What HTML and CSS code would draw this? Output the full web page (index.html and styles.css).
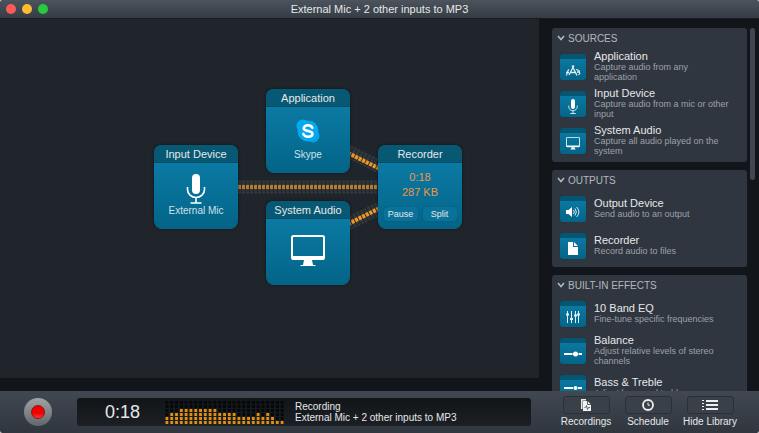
FILE: index.html
```html
<!DOCTYPE html>
<html lang="en">
<head>
    <meta charset="UTF-8">
    <meta name="viewport" content="width=device-width, initial-scale=1.0">
    <title>External Mic + 2 other inputs to MP3</title>
    <link rel="stylesheet" href="styles.css">
</head>
<body>
    <!-- shared icons -->
    <svg class="defs" width="0" height="0" aria-hidden="true">
        <symbol id="mic" viewBox="0 0 20 30">
            <rect x="6" y="0" width="8" height="20" rx="4" fill="#fff"/>
            <path d="M1.500 13v2.500a8.500 8 0 0 0 17 0V13M10 23.500V29M4.500 29h11" fill="none" stroke="#fff" stroke-width="1.600"/>
        </symbol>
        <symbol id="display" viewBox="0 0 34 32">
            <rect x="1" y="1" width="32" height="23" rx="1.500" fill="none" stroke="#fff" stroke-width="2"/>
            <path d="M1 21h32v3.500H1zM13 25h8l1 5h2.500v1h-15v-1H12z" fill="#fff"/>
        </symbol>
        <symbol id="chevron" viewBox="0 0 8 6">
            <path d="M1 1l3 3.500 3-3.500" fill="none" stroke="#b4b8bd" stroke-width="1.600"/>
        </symbol>
    </svg>

    <div class="window">
        <header class="titlebar">
            <div class="lights">
                <button class="light red" aria-label="Close"></button>
                <button class="light yellow" aria-label="Minimize"></button>
                <button class="light green" aria-label="Zoom"></button>
            </div>
            <h1>External Mic + 2 other inputs to MP3</h1>
        </header>

        <div class="content">
            <main class="canvas">
                <svg class="wires" width="540" height="270" aria-hidden="true">
                    <g class="wire">
                        <path class="off" d="M238 168H378"/>
                        <path class="gap" d="M238 164H378M238 172H378"/>
                        <path class="on" d="M238 168H378"/>
                    </g>
                    <g class="wire">
                        <path class="off" d="M348 132L380 148"/>
                        <path class="gap" d="M350 129L382 145M346 136L378 152"/>
                        <path class="on bright" d="M348 134L380 150"/>
                    </g>
                    <g class="wire">
                        <path class="off" d="M348 205L380 189"/>
                        <path class="gap" d="M346 201L378 185M350 209L382 193"/>
                        <path class="on bright" d="M348 205L380 189"/>
                    </g>
                </svg>

                <section class="node application">
                    <h2>Application</h2>
                    <svg class="skype" width="24" height="24" viewBox="0 0 24 24" aria-hidden="true">
                        <circle cx="7" cy="7" r="6.500" fill="#00aff0"/>
                        <circle cx="17" cy="17" r="6.500" fill="#0a9fe6"/>
                        <circle cx="12" cy="12" r="10.500" fill="#05a9ed"/>
                        <path d="M16.300 8.800C15.500 7 13.900 6.300 12 6.300c-2.300 0-4.200 1-4.200 2.900 0 3.900 8.600 1.800 8.600 5.500 0 2-2 3-4.400 3-2.200 0-4-.9-4.700-2.800" fill="none" stroke="#fff" stroke-width="2.600" stroke-linecap="round"/>
                    </svg>
                    <p>Skype</p>
                </section>

                <section class="node input-device">
                    <h2>Input Device</h2>
                    <svg class="mic" width="20" height="30" aria-hidden="true"><use href="#mic"/></svg>
                    <p>External Mic</p>
                </section>

                <section class="node system-audio">
                    <h2>System Audio</h2>
                    <svg class="display" width="34" height="32" aria-hidden="true"><use href="#display"/></svg>
                </section>

                <section class="node recorder">
                    <h2>Recorder</h2>
                    <div class="stats">
                        <span>0:18</span>
                        <span>287 KB</span>
                    </div>
                    <div class="actions">
                        <button>Pause</button>
                        <button>Split</button>
                    </div>
                </section>
            </main>

            <aside class="library">
                <div class="groups">
                    <section class="group">
                        <h2><svg width="8" height="6" aria-hidden="true"><use href="#chevron"/></svg>SOURCES</h2>
                        <ul>
                            <li>
                                <span class="tile">
                                    <svg width="16" height="14" viewBox="0 0 16 14" fill="none" stroke="#e4eef2" aria-hidden="true">
                                        <path d="M4 12L9 2.500M7 2.500l4 8 1 2" stroke-width="1.300"/>
                                        <path d="M1 9.500h3M6 9.500h4M12 9h2.500" stroke-width="1.500"/>
                                        <path d="M1.500 12.500l1.500-5 1-1M11 6.500l3 1 .8 3-1.300 1.500" stroke-width="1.100"/>
                                    </svg>
                                </span>
                                <div>
                                    <h3>Application</h3>
                                    <p>Capture audio from any application</p>
                                </div>
                            </li>
                            <li>
                                <span class="tile"><svg width="10" height="15" aria-hidden="true"><use href="#mic"/></svg></span>
                                <div>
                                    <h3>Input Device</h3>
                                    <p>Capture audio from a mic or other input</p>
                                </div>
                            </li>
                            <li>
                                <span class="tile"><svg width="14" height="13" aria-hidden="true"><use href="#display"/></svg></span>
                                <div>
                                    <h3>System Audio</h3>
                                    <p>Capture all audio played on the system</p>
                                </div>
                            </li>
                        </ul>
                    </section>

                    <section class="group">
                        <h2><svg width="8" height="6" aria-hidden="true"><use href="#chevron"/></svg>OUTPUTS</h2>
                        <ul>
                            <li>
                                <span class="tile">
                                    <svg width="14" height="12" viewBox="0 0 14 12" aria-hidden="true">
                                        <path d="M0 4h2.500L6 1v10L2.500 8H0z" fill="#fff"/>
                                        <path d="M7.500 4q1.500 2 0 4M9 2.500q2.700 3.500 0 7M10.700 1q4.400 5 0 10" fill="none" stroke="#d4e6ed"/>
                                    </svg>
                                </span>
                                <div>
                                    <h3>Output Device</h3>
                                    <p>Send audio to an output</p>
                                </div>
                            </li>
                            <li>
                                <span class="tile">
                                    <svg width="10" height="13" viewBox="0 0 10 13" aria-hidden="true">
                                        <path d="M0 0h5v5h5v8H0zM6 0l4 4H6z" fill="#fff"/>
                                    </svg>
                                </span>
                                <div>
                                    <h3>Recorder</h3>
                                    <p>Record audio to files</p>
                                </div>
                            </li>
                        </ul>
                    </section>

                    <section class="group">
                        <h2><svg width="8" height="6" aria-hidden="true"><use href="#chevron"/></svg>BUILT-IN EFFECTS</h2>
                        <ul>
                            <li>
                                <span class="tile">
                                    <svg width="14" height="14" viewBox="0 0 14 14" stroke="#e4eef2" aria-hidden="true">
                                        <path d="M1.500 1v12M5.500 1v12M9.500 1v12M12.500 1v12"/>
                                        <path d="M0 4.500h3M4 9h3M8 5.500h3M11 4.500h3" stroke-width="2"/>
                                    </svg>
                                </span>
                                <div>
                                    <h3>10 Band EQ</h3>
                                    <p>Fine-tune specific frequencies</p>
                                </div>
                            </li>
                            <li>
                                <span class="tile">
                                    <svg width="18" height="14" viewBox="0 0 18 14" aria-hidden="true">
                                        <path d="M0 7h8M15 7h3" stroke="#fff" stroke-width="2"/>
                                        <path d="M8 7h7" stroke="#fff"/>
                                        <circle cx="11.500" cy="7" r="2.500" fill="#fff"/>
                                    </svg>
                                </span>
                                <div>
                                    <h3>Balance</h3>
                                    <p>Adjust relative levels of stereo channels</p>
                                </div>
                            </li>
                            <li>
                                <span class="tile">
                                    <svg width="18" height="14" viewBox="0 0 18 14" aria-hidden="true">
                                        <path d="M0 4h9M14 4h4M0 10h4M9 10h9" stroke="#fff" stroke-width="2"/>
                                        <circle cx="11.500" cy="4" r="2" fill="#fff"/>
                                        <circle cx="6.500" cy="10" r="2" fill="#fff"/>
                                    </svg>
                                </span>
                                <div>
                                    <h3>Bass &amp; Treble</h3>
                                    <p>Adjust bass and treble</p>
                                </div>
                            </li>
                        </ul>
                    </section>
                </div>
                <div class="scrollbar"></div>
            </aside>
        </div>

        <footer class="toolbar">
            <button class="record" aria-label="Stop recording"><span></span></button>

            <div class="lcd">
                <time>0:18</time>
                <svg class="meter" width="120" height="24" viewBox="0 0 125 24" preserveAspectRatio="none" aria-hidden="true">
                    <path class="led-off" d="M2 24V0M7 24V0M12 24V0M17 24V0M22 24V0M27 24V0M32 24V0M37 24V0M42 24V0M47 24V0M52 24V0M57 24V0M62 24V0M67 24V0M72 24V0M77 24V0M82 24V0M87 24V0M92 24V0M97 24V0M102 24V0M107 24V0M112 24V0M117 24V0M122 24V0"/>
                    <path class="led-on" d="M2 24v-8M7 24v-12M12 24v-12M17 24v-16M22 24v-16M27 24v-16M32 24v-16M37 24v-16M42 24v-16M47 24v-16M52 24v-16M57 24v-12M62 24v-12M67 24v-12M72 24v-12M77 24v-8M82 24v-8M87 24v-8M92 24v-8M97 24v-12M102 24v-8M107 24v-12M112 24v-8M117 24v-4M122 24v-4"/>
                </svg>
                <div class="status">
                    <p>Recording</p>
                    <p>External Mic + 2 other inputs to MP3</p>
                </div>
            </div>

            <nav class="tools">
                <div class="tool">
                    <button aria-labelledby="recordings">
                        <svg width="10" height="12" viewBox="0 0 10 12" aria-hidden="true">
                            <path d="M0 0h5v1.500H1.500V10H0z" fill="#e8eaec"/>
                            <path d="M2 2h4.500L10 5.500V12H2z" fill="#f2f3f4"/>
                            <path d="M6.500 2v3.500H10M3.500 8.500h1l1-2 1 4 1-2H9" fill="none" stroke="#3a4048" stroke-width=".8"/>
                        </svg>
                    </button>
                    <span id="recordings">Recordings</span>
                </div>
                <div class="tool">
                    <button aria-labelledby="schedule">
                        <svg width="12" height="12" viewBox="0 0 12 12" fill="none" stroke="#eceef0" aria-hidden="true">
                            <circle cx="6" cy="6" r="5" stroke-width="1.800"/>
                            <path d="M6 3.500V6.200h2"/>
                        </svg>
                    </button>
                    <span id="schedule">Schedule</span>
                </div>
                <div class="tool">
                    <button aria-labelledby="hide">
                        <svg width="16" height="11" viewBox="0 0 16 11" stroke="#eceef0" aria-hidden="true">
                            <path d="M0 .5h2M0 3.500h2M0 6.500h2M0 9.500h2"/>
                            <path d="M4 1h12M4 5h12M4 9h12" stroke-width="2"/>
                        </svg>
                    </button>
                    <span id="hide">Hide Library</span>
                </div>
            </nav>
        </footer>
    </div>
</body>
</html>
```
FILE: styles.css
```css
* {
    box-sizing: border-box;
    margin: 0;
    padding: 0;
}
body {
    background: #b9b9b9;
    font-family: "Liberation Sans", Arial, sans-serif;
    font-size: 10px;
    color: #e6e8ea;
}
button {
    border: none;
    color: inherit;
    font-family: inherit;
    cursor: pointer;
}
h1, h2, h3 {
    font-weight: normal;
}
ul {
    list-style: none;
}
.defs {
    position: absolute;
}
.window {
    display: flex;
    flex-direction: column;
    height: 100vh;
    background: #12161a;
    border-radius: 4px;
    overflow: hidden;
}

/* title bar */
.titlebar {
    display: grid;
    grid-template-columns: 60px 1fr 60px;
    align-items: center;
    height: 19px;
    background: linear-gradient(#4b535c, #353c44);
    border-bottom: 1px solid #181c22;
    flex-shrink: 0;
}
.titlebar h1 {
    font-size: 11px;
    line-height: 18px;
    text-align: center;
}
.lights {
    display: flex;
    gap: 6px;
    padding-left: 6px;
}
.light {
    width: 10px;
    height: 10px;
    border-radius: 50%;
}
.red {
    background: #fc5b57;
}
.yellow {
    background: #fdbb30;
}
.green {
    background: #27cb40;
}

/* canvas */
.content {
    display: flex;
    flex: 1;
    min-height: 0;
}
.canvas {
    position: relative;
    flex: 1;
    margin-bottom: 13px;
    background: #20242b;
}
.wires {
    position: absolute;
    top: 0;
    left: 0;
}
.wire path {
    fill: none;
}
.wire .off {
    stroke: #343940;
    stroke-width: 13px;
    stroke-dasharray: 3 1;
}
.wire .gap {
    stroke: #262a31;
    stroke-width: 1px;
}
.wire .on {
    stroke: #b97c2a;
    stroke-width: 4px;
    stroke-dasharray: 3 1;
}
.wire .bright {
    stroke: #f09a22;
}
.node {
    position: absolute;
    display: flex;
    flex-direction: column;
    align-items: center;
    width: 84px;
    height: 84px;
    border-radius: 8px;
    overflow: hidden;
    background: linear-gradient(#0b7aa4 20%, #036487);
    box-shadow: 0 0 3px #10151a;
}
.node h2 {
    width: 100%;
    height: 18px;
    background: #065873;
    border-bottom: 1px solid #064c66;
    font-size: 11px;
    line-height: 18px;
    text-align: center;
}
.node p {
    position: absolute;
    bottom: 12px;
    line-height: 12px;
    color: #cfe0e8;
}
.application {
    left: 266px;
    top: 70px;
}
.input-device {
    left: 154px;
    top: 126px;
}
.system-audio {
    left: 266px;
    top: 182px;
}
.recorder {
    left: 378px;
    top: 126px;
}
.skype {
    margin-top: 12px;
}
.mic {
    margin-top: 11px;
}
.display {
    margin-top: 16px;
}
.stats {
    display: flex;
    flex-direction: column;
    align-items: center;
    margin-top: 7px;
    font-size: 11px;
    line-height: 15px;
    color: #f09448;
}
.actions {
    display: flex;
    gap: 5px;
    margin-top: 7px;
}
.actions button {
    width: 34px;
    height: 14px;
    border-radius: 3px;
    background: #0a7199;
    box-shadow: 0 0 1px #024863;
    font-size: 9px;
    line-height: 14px;
}

/* library */
.library {
    display: flex;
    gap: 3px;
    width: 220px;
    padding: 9px 4px 0 13px;
    background: #12161a;
    overflow: hidden;
}
.groups {
    display: flex;
    flex-direction: column;
    flex: 1;
    gap: 8px;
}
.group {
    flex-shrink: 0;
    padding-bottom: 3px;
    border-radius: 3px;
    background: #30363f;
}
.group h2 {
    display: flex;
    align-items: center;
    gap: 3px;
    height: 20px;
    padding-left: 5px;
    font-size: 10px;
    color: #b4b8bd;
}
.group li {
    display: flex;
    align-items: center;
    gap: 8px;
    height: 37px;
    padding: 0 16px 0 8px;
}
.group li div {
    padding-bottom: 2px;
}
.group h3 {
    font-size: 11px;
    line-height: 12px;
}
.group p {
    font-size: 9px;
    line-height: 10px;
    color: #9ba1a8;
}
.tile {
    display: flex;
    align-items: center;
    justify-content: center;
    flex-shrink: 0;
    width: 26px;
    height: 26px;
    padding-top: 6px;
    border-radius: 3px;
    background: linear-gradient(#045673 5px, #0b78a1 5px, #046489);
    box-shadow: 0 0 1px #12303e;
}
.scrollbar {
    width: 5px;
    height: 152px;
    border-radius: 3px;
    background: #414750;
}

/* bottom toolbar */
.toolbar {
    display: flex;
    align-items: center;
    flex-shrink: 0;
    height: 42px;
    padding: 0 18px 0 24px;
    background: linear-gradient(#424852, #2f363e);
}
.record {
    display: flex;
    align-items: center;
    justify-content: center;
    width: 28px;
    height: 28px;
    border-radius: 50%;
    background: linear-gradient(#a0a4a6, #62676b);
}
.record span {
    width: 14px;
    height: 14px;
    border: 1px solid #8e1512;
    border-radius: 50%;
    background: linear-gradient(#f00000 60%, #ff3a30);
}
.lcd {
    display: flex;
    align-items: center;
    flex: 1;
    height: 28px;
    margin: 0 24px 0 25px;
    padding-left: 28px;
    border-radius: 3px;
    background: linear-gradient(#111518, #1c2025);
}
.lcd time {
    width: 60px;
    font-size: 18px;
}
.led-off,
.led-on {
    fill: none;
    stroke: #050708;
    stroke-width: 3px;
    stroke-dasharray: 3 1;
}
.led-on {
    stroke: #e08f10;
}
.status {
    margin-left: 10px;
    line-height: 11px;
}
.tools {
    display: flex;
}
.tool {
    display: flex;
    flex-direction: column;
    align-items: center;
    gap: 2px;
    width: 62px;
    line-height: 12px;
}
.tool button {
    display: flex;
    align-items: center;
    justify-content: center;
    width: 47px;
    height: 18px;
    border: 1px solid #2a3037;
    border-radius: 3px;
    background: #3a4048;
}
```
